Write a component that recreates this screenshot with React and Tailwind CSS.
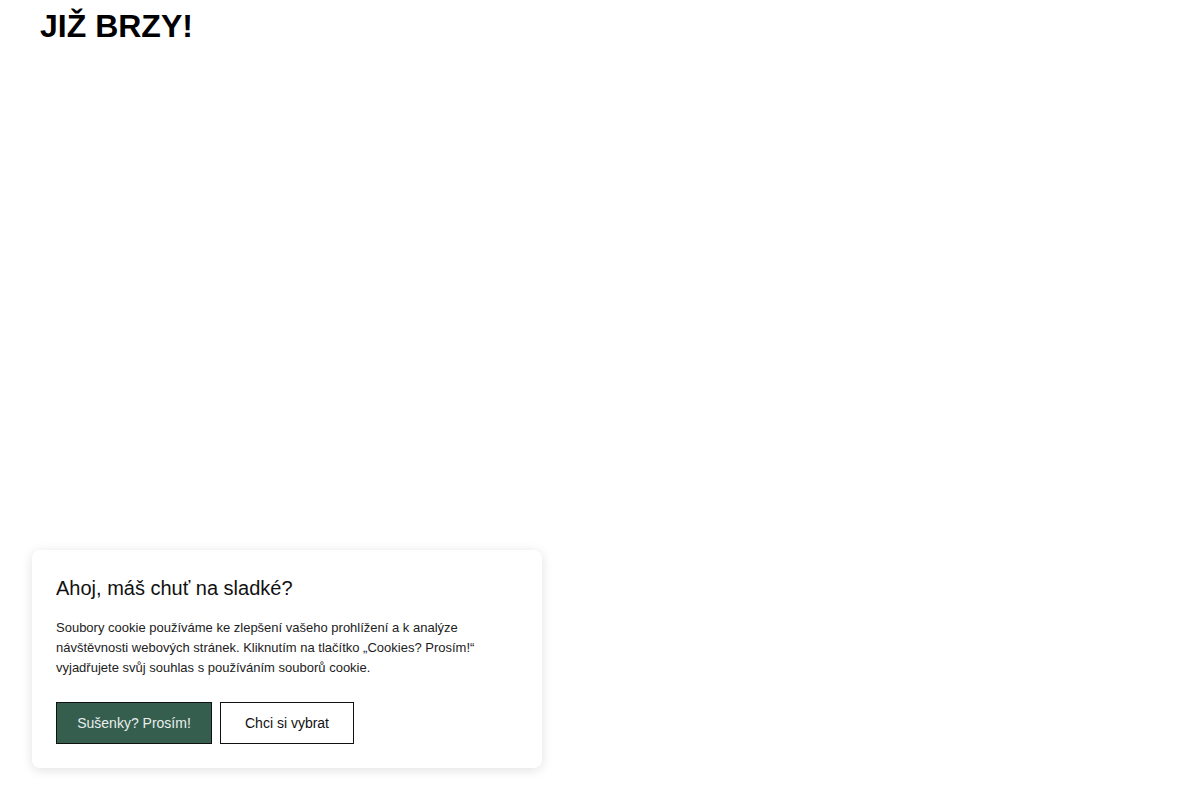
export default function App() {
  return (
    <div className="min-h-[800px] w-[1200px] bg-white relative" style={{ fontFamily: '"Liberation Sans", Arial, sans-serif' }}>
      <h1 className="pl-10 pt-2 text-[32px] leading-[36px] font-bold text-black">JIŽ BRZY!</h1>
      <div className="absolute left-8 top-[550px] w-[510px] rounded-lg bg-white p-6 shadow-[0_2px_12px_rgba(0,0,0,0.12)]">
        <h2 className="text-[20px] leading-7 text-[#111]">Ahoj, máš chuť na sladké?</h2>
        <p className="mt-4 text-[13px] leading-5 text-[#222]">
          Soubory cookie používáme ke zlepšení vašeho prohlížení a k analýze návštěvnosti webových stránek. Kliknutím na tlačítko „Cookies? Prosím!“ vyjadřujete svůj souhlas s používáním souborů cookie.
        </p>
        <div className="mt-6 flex gap-2">
          <button className="h-[42px] w-[156px] border border-[#111] bg-[#355e4f] text-[14px] text-[#e8efec]">Sušenky? Prosím!</button>
          <button className="h-[42px] w-[134px] border border-[#111] bg-white text-[14px] text-[#111]">Chci si vybrat</button>
        </div>
      </div>
    </div>
  );
}
